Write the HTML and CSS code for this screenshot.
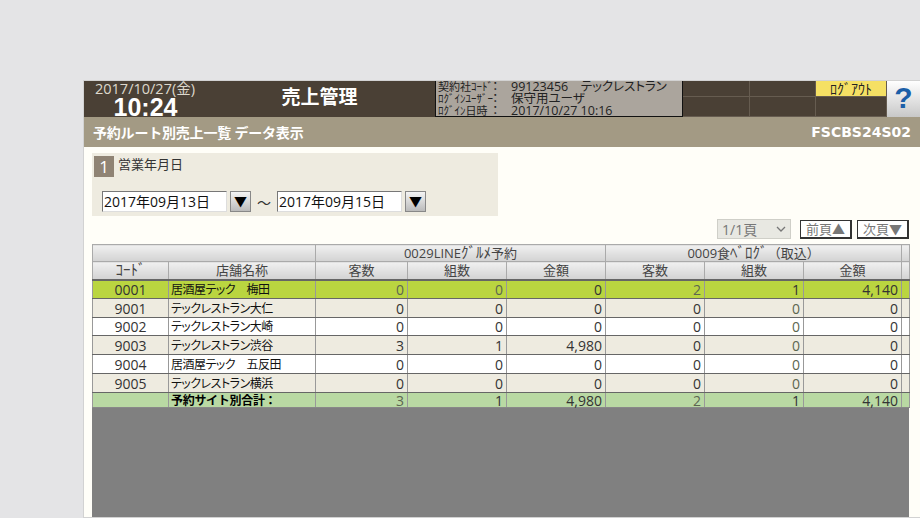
FILE: index.html
```html
<!DOCTYPE html>
<html lang="ja">
<head>
    <meta charset="UTF-8">
    <title>売上管理</title>
    <link rel="stylesheet" href="styles.css">
</head>
<body>
<div class="window">
    <header class="top">
        <div class="clock">
            <div class="date">2017/10/27(金)</div>
            <div class="time">10:24</div>
        </div>
        <div class="app-title">売上管理</div>
        <div class="info">
            <div class="info-row"><span class="info-key">契約社ｺｰﾄﾞ</span><span class="info-sep">：</span><span>99123456　テックレストラン</span></div>
            <div class="info-row"><span class="info-key">ﾛｸﾞｲﾝﾕｰｻﾞｰ</span><span class="info-sep">：</span><span>保守用ユーザ</span></div>
            <div class="info-row"><span class="info-key">ﾛｸﾞｲﾝ日時</span><span class="info-sep">：</span><span>2017/10/27 10:16</span></div>
        </div>
        <div class="slots">
            <div class="slot"></div>
            <div class="slot slot-w2"></div>
            <div class="slot slot-logout">ﾛｸﾞｱｳﾄ</div>
            <div class="slot"></div>
            <div class="slot slot-w2"></div>
            <div class="slot"></div>
        </div>
        <div class="help">?</div>
    </header>

    <div class="titlebar">
        <span>予約ルート別売上一覧 データ表示</span>
        <span class="screen-id">FSCBS24S02</span>
    </div>

    <div class="content">
        <div class="search">
            <div class="search-head">
                <span class="num">1</span>
                <span class="search-label">営業年月日</span>
            </div>
            <div class="search-range">
                <div class="date-input">2017年09月13日</div>
                <div class="drop">▼</div>
                <span class="tilde">～</span>
                <div class="date-input">2017年09月15日</div>
                <div class="drop">▼</div>
            </div>
        </div>

        <div class="pager">
            <div class="page-select">
                <span>1/1頁</span>
                <svg width="10" height="6" viewBox="0 0 10 6"><path d="M1 1l4 4 4-4" fill="none" stroke="#777" stroke-width="1.3"/></svg>
            </div>
            <div class="page-btn">前頁▲</div>
            <div class="page-btn">次頁▼</div>
        </div>

        <table class="sales">
            <colgroup>
                <col class="c-code"><col class="c-name">
                <col class="c-a"><col class="c-b"><col class="c-b">
                <col class="c-b"><col class="c-b"><col class="c-last"><col class="c-end">
            </colgroup>
            <thead>
                <tr class="head1">
                    <th colspan="2"></th>
                    <th colspan="3">0029LINE<span class="kana">ｸﾞﾙﾒ</span>予約</th>
                    <th colspan="3">0009食<span class="kana">ﾍﾞﾛｸﾞ</span>（取込）</th>
                    <th></th>
                </tr>
                <tr class="head2">
                    <th><span class="kana">ｺｰﾄﾞ</span></th><th>店舗名称</th>
                    <th>客数</th><th>組数</th><th>金額</th>
                    <th>客数</th><th>組数</th><th>金額</th>
                    <th></th>
                </tr>
            </thead>
            <tbody>
                <tr class="picked">
                    <td class="code">0001</td><td class="name">居酒屋テック　梅田</td>
                    <td class="n dim">0</td><td class="n dim">0</td><td class="n">0</td>
                    <td class="n dim">2</td><td class="n">1</td><td class="n">4,140</td><td></td>
                </tr>
                <tr class="tan">
                    <td class="code">9001</td><td class="name">テックレストラン大仁</td>
                    <td class="n">0</td><td class="n">0</td><td class="n">0</td>
                    <td class="n">0</td><td class="n dim">0</td><td class="n">0</td><td></td>
                </tr>
                <tr>
                    <td class="code">9002</td><td class="name">テックレストラン大崎</td>
                    <td class="n">0</td><td class="n">0</td><td class="n">0</td>
                    <td class="n">0</td><td class="n dim">0</td><td class="n">0</td><td></td>
                </tr>
                <tr class="tan">
                    <td class="code">9003</td><td class="name">テックレストラン渋谷</td>
                    <td class="n">3</td><td class="n">1</td><td class="n">4,980</td>
                    <td class="n">0</td><td class="n dim">0</td><td class="n">0</td><td></td>
                </tr>
                <tr>
                    <td class="code">9004</td><td class="name">居酒屋テック　五反田</td>
                    <td class="n">0</td><td class="n">0</td><td class="n">0</td>
                    <td class="n">0</td><td class="n dim">0</td><td class="n">0</td><td></td>
                </tr>
                <tr class="tan">
                    <td class="code">9005</td><td class="name">テックレストラン横浜</td>
                    <td class="n">0</td><td class="n">0</td><td class="n">0</td>
                    <td class="n">0</td><td class="n dim">0</td><td class="n">0</td><td></td>
                </tr>
                <tr class="total">
                    <td class="code"></td><td class="name total-label">予約サイト別合計：</td>
                    <td class="n dim">3</td><td class="n">1</td><td class="n">4,980</td>
                    <td class="n dim">2</td><td class="n">1</td><td class="n">4,140</td><td></td>
                </tr>
            </tbody>
        </table>
        <div class="empty"></div>
    </div>
</div>
</body>
</html>
```

FILE: styles.css
```css
* {
    box-sizing: border-box;
}
html, body {
    margin: 0;
    height: 518px;
    overflow: hidden;
}
body {
    background-color: #e4e4e6;
    padding: 80px 0 0 83px;
    font-family: "Open Sans", "Noto Sans CJK JP", sans-serif;
    font-size: 14px;
    color: #333;
    font-feature-settings: "palt";
}
.window {
    width: 837px;
    height: 438px;
    border: 1px solid #d2d2d2;
    border-right: none;
    background-color: #fffef8;
    display: flex;
    flex-direction: column;
}
.top {
    height: 36px;
    flex: none;
    display: flex;
    background-color: #4a4035;
}
.clock {
    width: 125px;
    flex: none;
    text-align: center;
    color: #fff;
}
.date {
    font-size: 14.5px;
    line-height: 15px;
    color: #ddd8cc;
    padding-right: 3px;
}
.time {
    font-family: "Liberation Sans", sans-serif;
    font-size: 25px;
    line-height: 21px;
    font-weight: bold;
    padding-top: 1px;
    padding-right: 2px;
}
.app-title {
    width: 221px;
    flex: none;
    text-align: center;
    color: #fff;
    font-size: 19px;
    font-weight: bold;
    line-height: 33px;
}
.info {
    width: 248px;
    margin-left: 5px;
    flex: none;
    background-color: #aba59d;
    border-left: 1px solid #111;
    border-bottom: 1px solid #111;
    border-right: 1px solid #111;
    padding-left: 2px;
    font-size: 12.5px;
    line-height: 12px;
    color: #222;
}
.info-row {
    display: flex;
    height: 12px;
    white-space: nowrap;
}
.info-key {
    width: 54px;
    font-size: 11px;
    font-feature-settings: normal;
}
.info-sep {
    width: 19px;
}
.slots {
    width: 204px;
    flex: none;
    display: grid;
    grid-template-columns: 67px 66px 71px;
    grid-template-rows: 16px 20px;
}
.slot {
    border-right: 1px solid #665c50;
    border-bottom: 1px solid #665c50;
}
.slot-logout {
    background-color: #f5e064;
    color: #222;
    font-size: 14px;
    line-height: 15px;
    text-align: center;
    font-feature-settings: normal;
}
.help {
    flex: 1;
    text-align: center;
    background: linear-gradient(#ffffff, #c8c8c8);
    color: #1c5fa8;
    font-family: "Liberation Sans", sans-serif;
    font-size: 30px;
    font-weight: bold;
    line-height: 33px;
}
.titlebar {
    height: 30px;
    flex: none;
    display: flex;
    justify-content: space-between;
    align-items: center;
    padding: 0 9px 0 9px;
    background-color: #a39a84;
    color: #fff;
    font-size: 14px;
    letter-spacing: -0.2px;
    font-weight: bold;
    font-feature-settings: normal;
}
.screen-id {
    font-family: "DejaVu Sans", sans-serif;
    font-size: 14px;
    letter-spacing: 0;
}
.content {
    flex: 1;
    padding: 6px 11px 0 8px;
    display: flex;
    flex-direction: column;
    min-height: 0;
}
.search {
    width: 406px;
    height: 63px;
    flex: none;
    padding: 3px 2px;
    background-color: #eeebe0;
}
.search-head {
    display: flex;
    height: 21px;
}
.num {
    width: 20px;
    height: 21px;
    background-color: #8f8374;
    color: #fff;
    font-size: 17px;
    line-height: 22px;
    text-align: center;
}
.search-label {
    font-size: 13px;
    line-height: 16px;
    margin-left: 4px;
}
.search-range {
    display: flex;
    align-items: center;
    margin: 14px 0 0 8px;
}
.date-input {
    width: 125px;
    height: 21px;
    padding-left: 1px;
    background-color: #fff;
    border: 1px solid #ddd;
    border-top-color: #777;
    border-left-color: #777;
    font-size: 14px;
    line-height: 19px;
    color: #111;
}
.drop {
    width: 21px;
    height: 21px;
    margin-left: 3px;
    background: linear-gradient(#f4f4f4, #bbb);
    border: 1px solid #888;
    color: #000;
    font-size: 13px;
    line-height: 19px;
    text-align: center;
}
.tilde {
    width: 26px;
    text-align: center;
    color: #333;
}
.pager {
    height: 20px;
    flex: none;
    margin-top: 3px;
    display: flex;
    justify-content: flex-end;
    gap: 5px;
}
.page-select {
    width: 74px;
    height: 20px;
    margin-right: 4px;
    padding: 0 4px 0 4px;
    display: flex;
    align-items: center;
    justify-content: space-between;
    background-color: #e8e8e2;
    border: 1px solid #cfcfc8;
    color: #777;
}
.page-btn {
    width: 52px;
    height: 19px;
    margin-top: 1px;
    background-color: #fff;
    border: 1px solid #333;
    border-right-width: 2px;
    border-bottom-width: 2px;
    color: #777;
    font-size: 13px;
    line-height: 16px;
    text-align: center;
}
.sales {
    width: 817px;
    flex: none;
    margin-top: 5px;
    table-layout: fixed;
    border-collapse: collapse;
}
.c-code { width: 76px; }
.c-name { width: 147px; }
.c-a { width: 92px; }
.c-b { width: 99px; }
.c-last { width: 98px; }
.c-end { width: 8px; }
.sales th {
    padding: 0;
    font-weight: normal;
    font-size: 13px;
    line-height: 15px;
    color: #444;
    background: linear-gradient(#f0f0f0, #d2d2d2);
    border: 1px solid #aaa;
    font-feature-settings: normal;
    white-space: nowrap;
}
.kana {
    font-size: 15px;
    line-height: 14px;
}
.head1 {
    height: 17px;
}
.head2 {
    height: 18px;
}
.head2 th {
    border-bottom: 2px solid #666;
}
.sales td {
    height: 19px;
    padding: 1px 3px 0;
    border: 1px solid #999;
    border-bottom-color: #666;
    background-color: #fff;
    line-height: 16px;
    white-space: nowrap;
}
.sales tbody tr:nth-child(3) td {
    height: 18px;
}
.sales .tan td {
    background-color: #eeebe0;
}
.sales .picked td {
    background-color: #bad540;
}
.sales .total td {
    height: 15px;
    line-height: 13px;
    background-color: #b9d9a3;
    border-bottom-color: #888;
}
.sales .code {
    text-align: center;
}
.sales .name {
    padding-left: 2px;
    border-left-color: #555;
    font-size: 12px;
    letter-spacing: -0.5px;
    color: #111;
}
.sales .n {
    text-align: right;
}
.sales .dim {
    color: #5c6650;
}
.sales .total-label {
    font-weight: bold;
    color: #000;
    letter-spacing: -0.3px;
    font-feature-settings: normal;
}
.empty {
    width: 817px;
    flex: 1;
    background-color: #808080;
}
```
